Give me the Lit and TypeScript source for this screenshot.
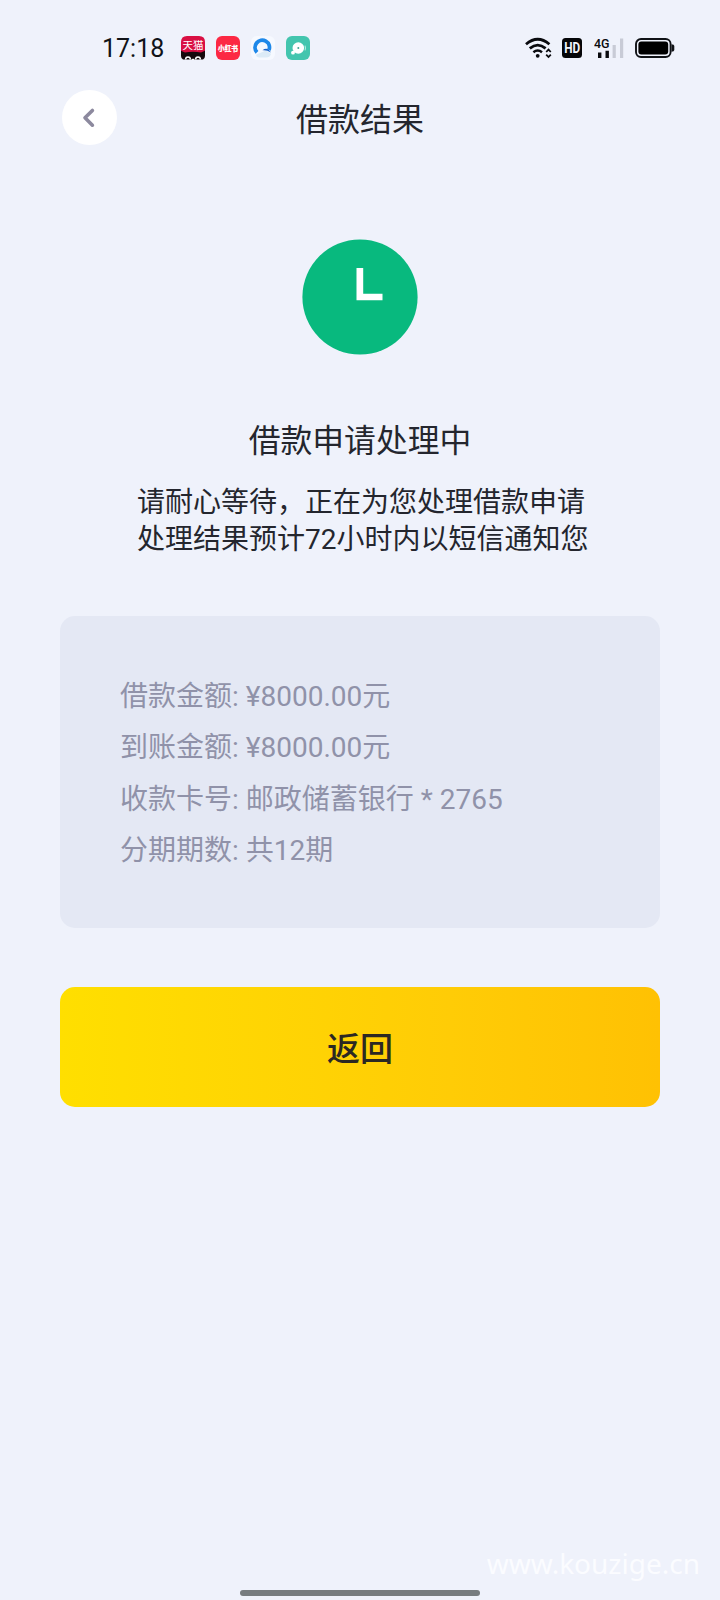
import { LitElement, html, css } from "lit";
import { customElement } from "lit/decorators.js";

const FONT = css`Roboto, "Noto Sans CJK SC", sans-serif`;

@customElement("status-bar")
class StatusBar extends LitElement {
  static styles = css`
    :host {
      display: flex;
      align-items: center;
      justify-content: space-between;
      height: 40px;
      padding: 28px 45px 0 102px;
      box-sizing: content-box;
      font-family: ${FONT};
    }
    .side { display: flex; align-items: center; }
    .time { font-size: 25px; line-height: 38px; padding-top: 2px; color: #111318; width: 79px; }
    .apps { display: flex; gap: 11px; }
    svg { display: block; }
    .wifi { margin-right: 9px; }
    .hd { margin-right: 12px; }
    .signal { margin-right: 11px; }
  `;
  render() {
    return html`
      <div class="side">
        <span class="time">17:18</span>
        <div class="apps">
          <svg width="24" height="24" viewBox="0 0 24 24">
            <path d="M6 0H18Q24 0 24 6V18H0V6Q0 0 6 0Z" fill="#d90f43" />
            <path d="M0 14.8 4 16.6Q12 15 20 16.6L24 14.8V20Q24 22.5 22 23.6H2Q0 22.5 0 20Z" fill="#15090c" />
            <text x="12" y="13" text-anchor="middle" font-size="10.5" fill="#fff">天猫</text>
            <path d="M4.6 23.6A2.4 2.6 0 0 1 9.4 23.6M14.6 23.6A2.4 2.6 0 0 1 19.4 23.6" fill="none" stroke="#fff" stroke-width="1.5" />
            <path d="M10.8 24v-1.2h2.4V24z" fill="#fff" />
          </svg>
          <svg width="24" height="24" viewBox="0 0 24 24">
            <rect width="24" height="24" rx="6" fill="#fc2843" />
            <text x="12" y="14.8" text-anchor="middle" font-size="6.7" font-weight="900" fill="#fff" stroke="#fff" stroke-width=".2">小红书</text>
          </svg>
          <svg width="24" height="24" viewBox="0 0 24 24">
            <rect width="24" height="24" rx="6" fill="#f6f9ff" />
            <path d="M5.4 18.6 12 15.8Q16 13 20 18 19 21.5 15 21.5H8Q4.5 21 5.4 18.6Z" fill="#dcebf7" />
            <path d="M6 16.4A7.2 7.2 0 1 1 18 14" fill="none" stroke="#1e88e9" stroke-width="3.8" />
            <path d="M11.5 14.2Q16.4 10.4 20 16.6 16 13.8 11.5 14.2Z" fill="#1762c9" />
          </svg>
          <svg width="24" height="24" viewBox="0 0 24 24">
            <rect width="24" height="24" rx="6" fill="#43c5ae" />
            <circle cx="12.3" cy="12" r="5.8" fill="#fff" />
            <circle cx="7" cy="16.7" r="1.9" fill="#fff" />
            <circle cx="12.3" cy="12" r="1" fill="#43a493" />
            <path d="M19 9.6Q20 12 19 14.4" fill="none" stroke="#b9eee2" stroke-width="1.1" />
          </svg>
        </div>
      </div>
      <div class="side">
        <svg class="wifi" width="28" height="22" viewBox="0 0 28 22" fill="none" stroke="#090a0e">
          <path d="M1 7.2Q12.7-2.6 24.4 7.2" stroke-width="2.8" />
          <path d="M4.8 11.4Q12.7 4.8 20.6 11.4" stroke-width="2.8" />
          <path d="M8.4 15.2Q12.7 11.8 17 15.2" stroke-width="2.6" />
          <circle cx="12.7" cy="18.8" r="1.9" fill="#090a0e" stroke="none" />
          <path d="M21.2 15 23.5 12.6 25.8 15M21.2 17.6 23.5 20 25.8 17.6" stroke-width="1.8" />
        </svg>
        <svg class="hd" width="20" height="20" viewBox="0 0 20 20">
          <rect width="20" height="20" rx="3.5" fill="#050608" />
          <text x="2.2" y="15" font-size="14" font-weight="700" fill="#f2f4fc" textLength="16" lengthAdjust="spacingAndGlyphs">HD</text>
        </svg>
        <svg class="signal" width="30" height="22" viewBox="0 0 30 22">
          <text x="0" y="10.5" font-size="13.4" font-weight="500" fill="#090a0e" textLength="15.5" lengthAdjust="spacingAndGlyphs">4G</text>
          <path d="M4 15.5h3.4v5.5H4zM11.5 13.8h3.4v7.2h-3.4z" fill="#090a0e" />
          <path d="M18.6 8h3.2v13h-3.2zM26 1.4h3.2V21h-3.2z" fill="#c8cbd6" />
        </svg>
        <svg width="40" height="22" viewBox="0 0 40 22">
          <rect x="1" y="2" width="34.6" height="18" rx="5" fill="none" stroke="#101216" stroke-width="1.9" />
          <rect x="3.4" y="4.4" width="29.8" height="13.2" rx="3" fill="#000" />
          <path d="M36.5 7.3Q39.3 7.3 39.3 9v4Q39.3 14.7 36.5 14.7Z" fill="#101216" />
        </svg>
      </div>
    `;
  }
}

@customElement("app-root")
class AppRoot extends LitElement {
  static styles = css`
    :host {
      display: flex;
      flex-direction: column;
      width: 720px;
      height: 1600px;
      background: #eff2fb;
      color: #24262e;
      font-family: ${FONT};
      overflow: hidden;
    }
    .nav {
      display: grid;
      grid-template-columns: 55px 1fr 55px;
      align-items: center;
      height: 55px;
      padding: 22px 61.5px 0;
    }
    .back {
      width: 55px;
      height: 55px;
      padding: 0;
      border: 0;
      border-radius: 50%;
      background: #fff;
    }
    svg { display: block; }
    .title { margin: 0; text-align: center; font-size: 32px; line-height: 40px; font-weight: 400; padding-top: 5px; }
    main { display: flex; flex-direction: column; padding: 94px 60px 0; }
    .state { align-self: center; }
    .heading { margin: 62px 0 0; text-align: center; font-size: 31.8px; line-height: 48px; font-weight: 400; }
    .desc { margin: 19px 0 0 77px; font-size: 28px; line-height: 37px; white-space: nowrap; }
    .card {
      display: flex;
      flex-direction: column;
      box-sizing: border-box;
      height: 312px;
      margin-top: 58px;
      padding: 55px 60px;
      border-radius: 15px;
      background: #e4e8f4;
      color: #9092a9;
      font-size: 28px;
      line-height: 51.4px;
      white-space: pre;
    }
    .submit {
      height: 120px;
      margin-top: 59px;
      padding: 6px 0 0;
      border: 0;
      border-radius: 15px;
      background: linear-gradient(90deg, #ffdf00, #ffcc06 65%, #ffc103);
      color: #2b2823;
      font: 500 33px/50px ${FONT};
    }
    .foot { margin-top: auto; }
    .mark {
      padding-right: 20px;
      text-align: right;
      font: 28px/34px "Noto Sans", sans-serif;
      color: #fbfcff;
    }
    .home { width: 240px; height: 6px; margin: 10px auto 4px; border-radius: 3px; background: #777c7f; }
  `;

  private rows = [
    ["借款金额", "¥8000.00元"],
    ["到账金额", "¥8000.00元"],
    ["收款卡号", "邮政储蓄银行 * 2765"],
    ["分期期数", "共12期"],
  ];

  render() {
    return html`
      <status-bar></status-bar>
      <header class="nav">
        <button class="back" aria-label="返回">
          <svg width="55" height="55" viewBox="0 0 55 55" fill="none" stroke="#8c899e" stroke-width="3.6" stroke-linecap="round" stroke-linejoin="round">
            <path d="M30.4 20.4 23 27.8 30.4 35.2" />
          </svg>
        </button>
        <h1 class="title">借款结果</h1>
      </header>
      <main>
        <svg class="state" width="116" height="116" viewBox="0 0 116 116">
          <circle cx="58" cy="58" r="57.6" fill="#08b97e" />
          <path d="M54.5 29H61.2V54.8H80.5V61.3H54.5Z" fill="#fff" />
        </svg>
        <h2 class="heading">借款申请处理中</h2>
        <p class="desc">请耐心等待，正在为您处理借款申请<br />处理结果预计72小时内以短信通知您</p>
        <section class="card">${this.rows.map(([k, v]) => html`<div>${k}: ${v}</div>`)}</section>
        <button class="submit">返回</button>
      </main>
      <footer class="foot">
        <div class="mark">www.kouzige.cn</div>
        <div class="home"></div>
      </footer>
    `;
  }
}
